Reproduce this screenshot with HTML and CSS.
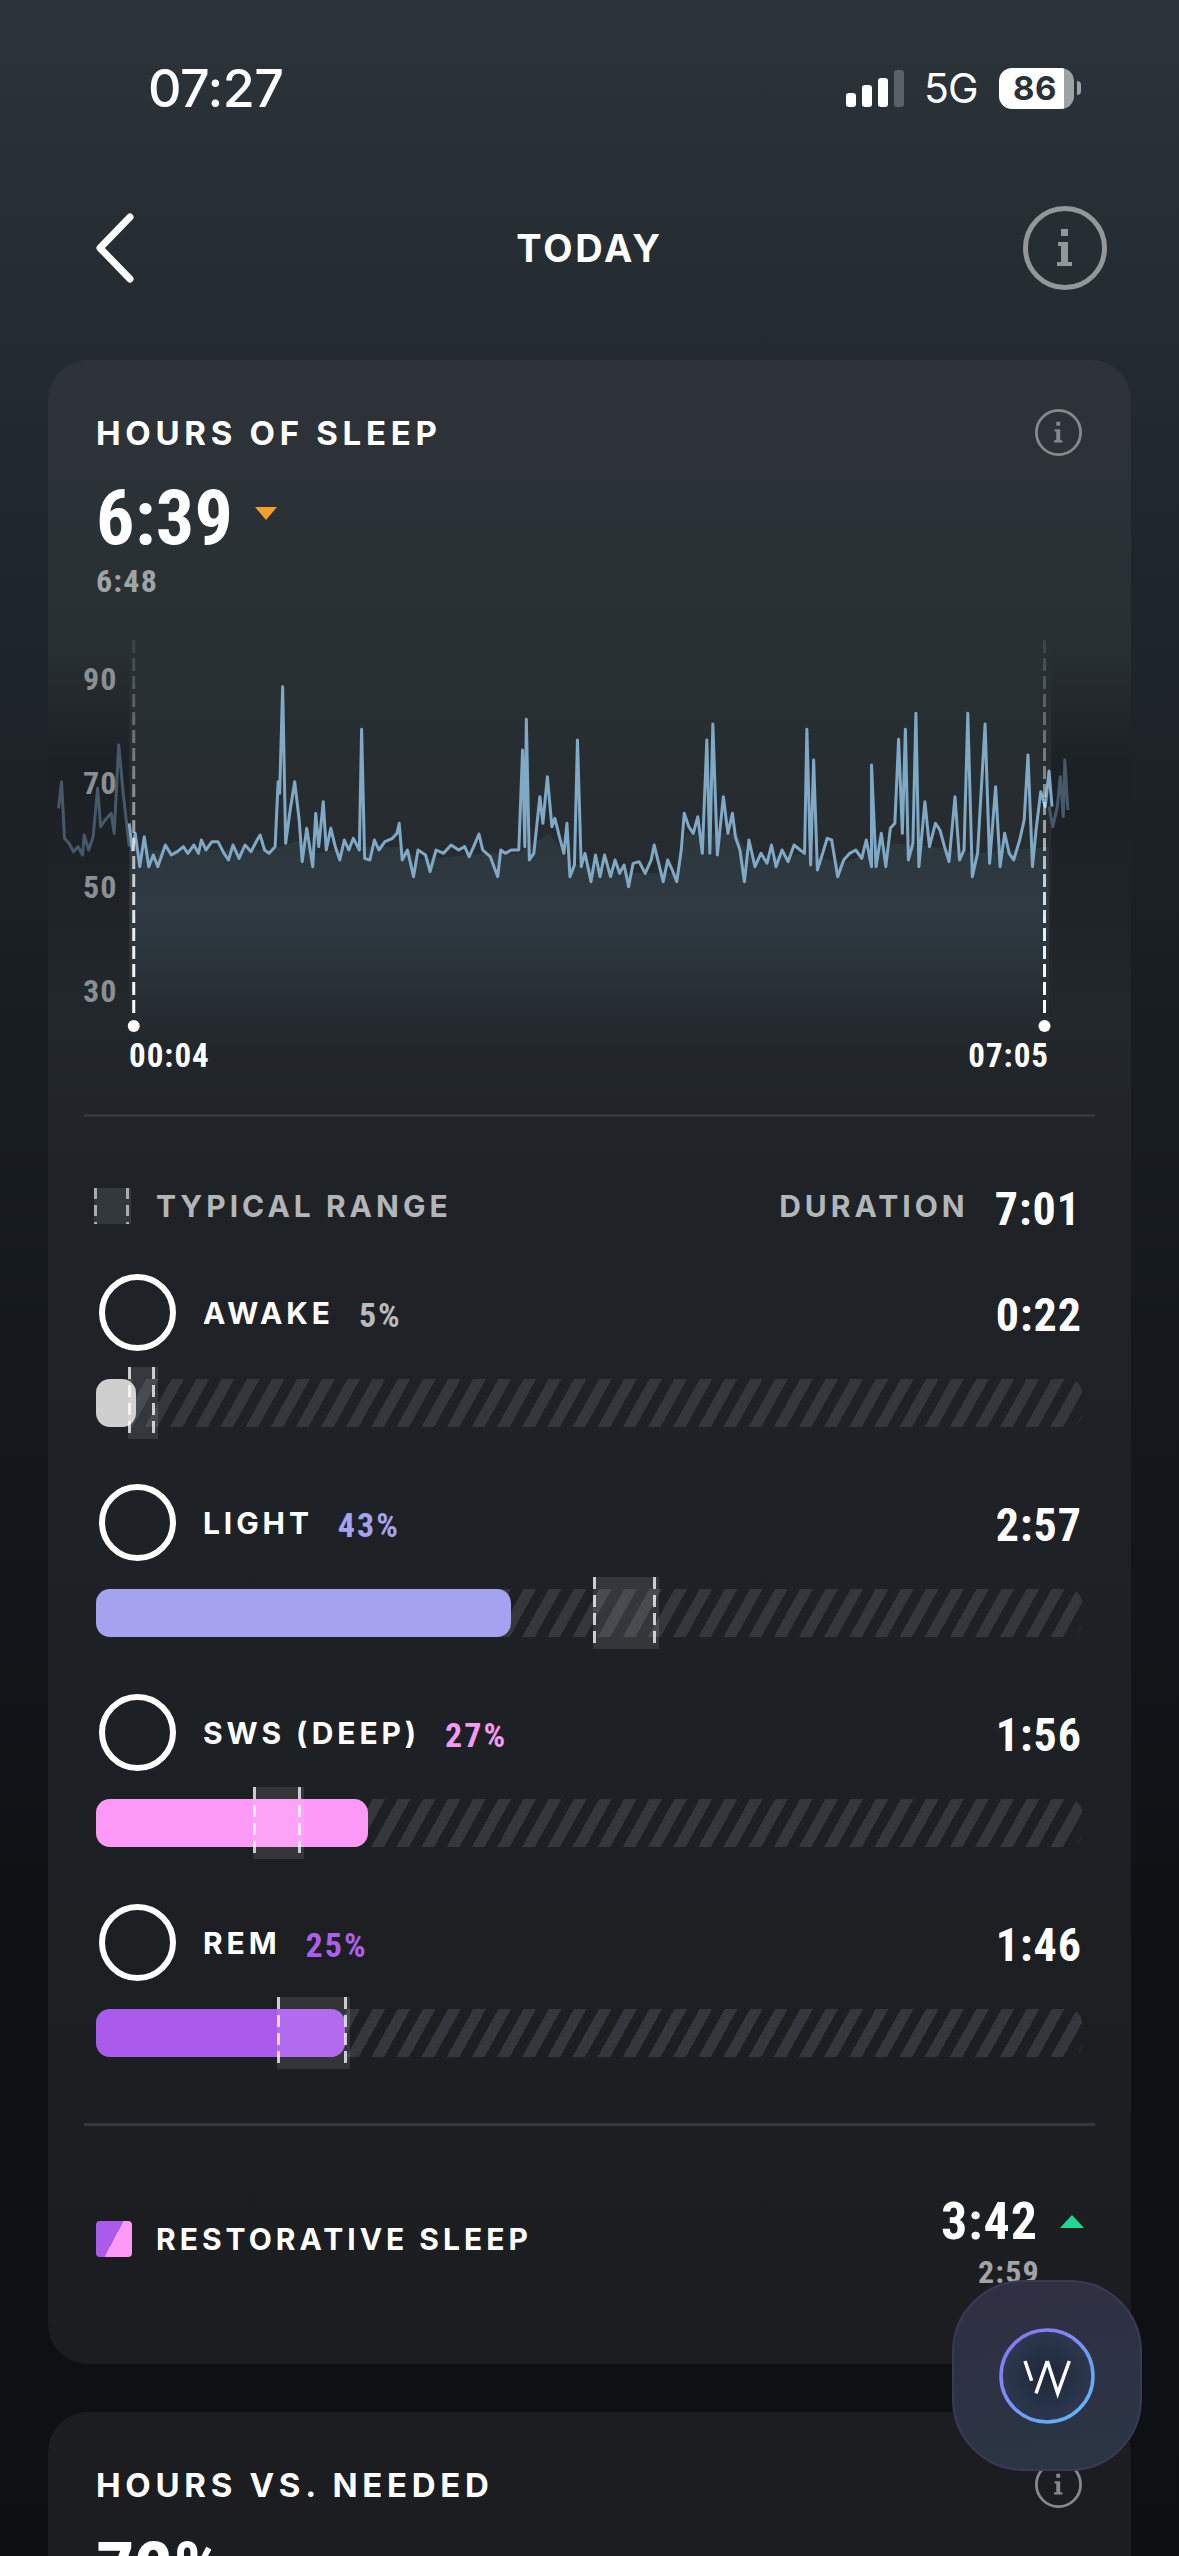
FILE: index.html
```html
<!DOCTYPE html>
<html lang="en">
<head>
    <meta charset="UTF-8">
    <title>Today</title>
    <link rel="stylesheet" href="styles.css">
</head>
<body>
    <svg class="defs" width="0" height="0">
        <symbol id="info" viewBox="0 0 84 84">
            <circle cx="42" cy="42" r="39.5" fill="none" stroke="currentColor" stroke-width="5"/>
            <path fill="currentColor" d="M38 23h7v7h-7zM35 36h10v20h4v4H34v-4h4V40h-3z"/>
        </symbol>
    </svg>

    <div class="status-bar">
        <span class="clock">07:27</span>
        <div class="status-right">
            <div class="signal">
                <span class="sig sig1"></span>
                <span class="sig sig2"></span>
                <span class="sig sig3"></span>
                <span class="sig sig4"></span>
            </div>
            <span class="network">5G</span>
            <div class="battery"><span class="battery-num">86</span></div>
            <span class="battery-nub"></span>
        </div>
    </div>

    <header class="nav">
        <div class="nav-side">
            <svg class="back" width="40" height="72" viewBox="0 0 40 72">
                <path d="M34 5 4 36l30 31" fill="none" stroke="#fff" stroke-width="7" stroke-linecap="round" stroke-linejoin="round"/>
            </svg>
        </div>
        <span class="nav-title">TODAY</span>
        <div class="nav-side">
            <svg class="info-big" width="84" height="84"><use href="#info"/></svg>
        </div>
    </header>

    <section class="card card-main">
        <div class="card-head">
            <span class="label">HOURS OF SLEEP</span>
            <svg class="info-small" width="47" height="47"><use href="#info"/></svg>
        </div>
        <div class="big-row">
            <span class="big-num">6:39</span>
            <span class="tri-down"></span>
        </div>
        <div class="sub-num">6:48</div>

        <div class="chart">
            <svg class="chart-svg" viewBox="64 0 1440 1482" preserveAspectRatio="none">
                <defs>
                    <linearGradient id="under" gradientUnits="userSpaceOnUse" x1="0" y1="700" x2="0" y2="1280">
                        <stop offset="0" stop-color="#2c373e"/>
                        <stop offset="0.3" stop-color="#2f3a42"/>
                        <stop offset="1" stop-color="#2f3a42" stop-opacity="0"/>
                    </linearGradient>
                    <linearGradient id="side" gradientUnits="userSpaceOnUse" x1="0" y1="60" x2="0" y2="1180">
                        <stop offset="0" stop-color="#12161a" stop-opacity="0"/>
                        <stop offset="0.35" stop-color="#12161a" stop-opacity="0.55"/>
                        <stop offset="0.7" stop-color="#12161a" stop-opacity="0.35"/>
                        <stop offset="1" stop-color="#12161a" stop-opacity="0"/>
                    </linearGradient>
                    <linearGradient id="dash" gradientUnits="userSpaceOnUse" x1="0" y1="60" x2="0" y2="1190">
                        <stop offset="0" stop-color="#fff" stop-opacity="0.08"/>
                        <stop offset="0.5" stop-color="#fff" stop-opacity="0.55"/>
                        <stop offset="0.75" stop-color="#fff" stop-opacity="0.9"/>
                        <stop offset="1" stop-color="#fff"/>
                    </linearGradient>
                </defs>
                <rect x="64" y="60" width="108" height="1120" fill="url(#side)"/>
                <rect x="1398" y="60" width="106" height="1120" fill="url(#side)"/>
                <polygon fill="url(#under)" points="172,690 220,690 300,690 360,690 400,660 420,700 480,680 530,680 560,720 640,700 690,700 730,640 760,730 830,760 900,760 912,640 980,640 1000,720 1070,700 1120,730 1190,670 1240,680 1300,700 1395,680 1395,1300 172,1300"/>
                <polyline class="hr-faded" points="78,565 82,485 86,655 92,670 98,695 104,680 110,705 112,645 118,690 124,650 130,505 134,620 140,600 148,580 152,640 158,375 164,520 172,680"/>
                <polyline class="hr-faded" points="1395,560 1400,620 1406,560 1410,470 1414,590 1416,420 1420,570"/>
                <polyline class="hr-line" points="172,610 176,690 180,640 186,740 192,650 198,740 204,705 210,740 220,675 228,705 236,695 244,680 250,700 258,675 264,700 268,660 274,690 282,665 290,665 298,700 304,720 310,675 318,715 326,675 334,695 342,660 346,645 352,690 358,700 366,680 370,485 372,520 376,200 380,670 386,570 392,485 398,600 402,725 408,625 416,740 420,580 424,680 430,545 434,690 440,625 446,680 452,720 458,660 464,690 470,655 478,690 481,328 485,715 492,720 498,660 504,690 512,665 522,655 528,640 531,610 535,720 542,690 550,770 556,690 566,705 572,755 580,690 590,700 600,675 610,690 618,680 624,710 630,680 637,642 642,690 652,710 662,770 666,690 672,700 680,690 690,690 695,390 698,680 700,298 704,720 710,700 718,530 722,610 728,470 734,620 738,595 744,650 750,700 754,610 758,770 764,735 768,360 773,740 778,700 786,785 792,705 798,770 804,705 812,770 818,720 824,760 830,735 836,800 842,730 850,725 858,760 866,720 870,675 876,730 882,785 888,720 894,750 900,785 906,690 910,580 916,620 922,640 928,590 934,700 940,360 944,700 948,312 954,705 962,530 968,640 974,580 978,650 984,690 990,785 996,660 1004,740 1012,700 1020,730 1026,675 1032,740 1040,690 1048,725 1056,675 1064,690 1070,700 1073,328 1078,735 1082,420 1087,750 1094,700 1100,655 1106,660 1114,770 1122,720 1130,700 1138,690 1146,715 1152,660 1159,740 1159,435 1165,740 1172,640 1178,740 1184,625 1190,610 1195,358 1200,640 1204,328 1208,720 1214,670 1218,280 1222,740 1230,545 1236,680 1244,610 1250,630 1256,680 1262,725 1270,530 1276,720 1282,690 1287,280 1293,770 1300,700 1310,312 1316,730 1324,500 1330,740 1336,640 1342,700 1348,720 1356,660 1362,600 1367,405 1373,740 1378,625 1384,515 1390,560 1395,453 1399,560"/>
                <line class="window" x1="178" y1="60" x2="178" y2="1190"/>
                <line class="window" x1="1389" y1="60" x2="1389" y2="1190"/>
                <ellipse cx="178" cy="1218" rx="8" ry="18" fill="#fff"/>
                <ellipse cx="1389" cy="1218" rx="8" ry="18" fill="#fff"/>
            </svg>
            <div class="chart-axis">
                <span>90</span>
                <span>70</span>
                <span>50</span>
                <span>30</span>
            </div>
            <div class="chart-times">
                <span>00:04</span>
                <span>07:05</span>
            </div>
        </div>
        <div class="divider"></div>

        <div class="typical">
            <span class="range-key"></span>
            <span class="label-muted typical-name">TYPICAL RANGE</span>
            <span class="label-muted duration-name">DURATION</span>
            <span class="time">7:01</span>
        </div>

        <div class="stages">
            <div class="stage">
                <div class="stage-head">
                    <span class="ring"></span>
                    <span class="stage-name">AWAKE</span>
                    <span class="pct pct-awake">5%</span>
                    <span class="time">0:22</span>
                </div>
                <div class="bar">
                    <div class="bar-fill fill-awake" style="width:4.1%"></div>
                    <div class="bar-range" style="left:3.2%;width:3.1%"></div>
                </div>
            </div>
            <div class="stage">
                <div class="stage-head">
                    <span class="ring"></span>
                    <span class="stage-name">LIGHT</span>
                    <span class="pct pct-light">43%</span>
                    <span class="time">2:57</span>
                </div>
                <div class="bar">
                    <div class="bar-fill fill-light" style="width:42.1%"></div>
                    <div class="bar-range" style="left:50.4%;width:6.7%"></div>
                </div>
            </div>
            <div class="stage">
                <div class="stage-head">
                    <span class="ring"></span>
                    <span class="stage-name">SWS (DEEP)</span>
                    <span class="pct pct-sws">27%</span>
                    <span class="time">1:56</span>
                </div>
                <div class="bar">
                    <div class="bar-fill fill-sws" style="width:27.6%"></div>
                    <div class="bar-range" style="left:15.9%;width:5.2%"></div>
                </div>
            </div>
            <div class="stage">
                <div class="stage-head">
                    <span class="ring"></span>
                    <span class="stage-name">REM</span>
                    <span class="pct pct-rem">25%</span>
                    <span class="time">1:46</span>
                </div>
                <div class="bar">
                    <div class="bar-fill fill-rem" style="width:25.3%"></div>
                    <div class="bar-range" style="left:18.4%;width:7.4%"></div>
                </div>
            </div>
        </div>
        <div class="divider divider-low"></div>

        <div class="restore">
            <div class="restore-left">
                <span class="restore-key"></span>
                <span class="label restore-name">RESTORATIVE SLEEP</span>
            </div>
            <div class="restore-right">
                <div class="restore-top">
                    <span class="restore-num">3:42</span>
                    <span class="tri-up"></span>
                </div>
                <div class="sub-num restore-sub">2:59</div>
            </div>
        </div>
    </section>

    <section class="card card-next">
        <div class="card-head">
            <span class="label">HOURS VS. NEEDED</span>
            <svg class="info-small" width="47" height="47"><use href="#info"/></svg>
        </div>
        <div class="big-row">
            <span class="big-num">72%</span>
        </div>
    </section>

    <!-- floating button -->
    <div class="fab">
        <svg class="fab-logo" width="96" height="96" viewBox="0 0 96 96">
            <defs>
                <linearGradient id="ringGrad" x1="0.15" y1="0.05" x2="0.85" y2="0.95">
                    <stop offset="0" stop-color="#8a76f2"/>
                    <stop offset="1" stop-color="#62b4f5"/>
                </linearGradient>
                <radialGradient id="ringFill" cx="0.5" cy="0.5" r="0.5">
                    <stop offset="0" stop-color="#1f2838"/>
                    <stop offset="1" stop-color="#2d3850"/>
                </radialGradient>
            </defs>
            <circle cx="48" cy="48" r="46" fill="url(#ringFill)" stroke="url(#ringGrad)" stroke-width="3.5"/>
            <path d="M26 33l6.700 19.700M48.300 33 37 65.300M48.300 33l10.400 32.300L70.300 33" fill="none" stroke="#fff" stroke-width="3.500"/>
        </svg>
    </div>
</body>
</html>
```

FILE: styles.css
```css
html, body {
    margin: 0;
    height: 2556px;
    overflow: hidden;
}
body {
    position: relative;
    width: 1179px;
    background: linear-gradient(180deg, #2b343a 0%, #232b30 14%, #181d21 40%, #0e1215 75%, #0c1013 100%);
    color: #fff;
    font-family: 'Roboto', sans-serif;
}
.defs {
    position: absolute;
}

/* status bar */
.status-bar {
    height: 176px;
    padding: 0 98px 0 148px;
    display: flex;
    align-items: center;
    justify-content: space-between;
}
.clock {
    font-family: 'Inter', sans-serif;
    font-size: 52px;
    font-weight: 500;
    letter-spacing: -0.5px;
}
.status-right {
    display: flex;
    align-items: center;
}
.signal {
    display: flex;
    align-items: flex-end;
    gap: 6px;
    height: 37px;
    margin-right: 20px;
}
.sig {
    width: 10px;
    border-radius: 3px;
    background: #fff;
}
.sig1 { height: 14px; }
.sig2 { height: 22px; }
.sig3 { height: 29px; }
.sig4 { height: 37px; background: #5b6369; }
.network {
    font-family: 'Inter', sans-serif;
    font-size: 41px;
    font-weight: 400;
    letter-spacing: -1px;
    width: 75px;
}
.battery {
    width: 75px;
    height: 41px;
    border-radius: 13px;
    background: linear-gradient(90deg, #fff 86.500%, #9da2a5 86.500%);
    display: flex;
    align-items: center;
    padding-left: 14px;
    box-sizing: border-box;
}
.battery-num {
    font-family: 'Inter', sans-serif;
    font-size: 33px;
    font-weight: 700;
    color: #2a3238;
    letter-spacing: 0.5px;
}
.battery-nub {
    width: 4px;
    height: 14px;
    margin-left: 3px;
    border-radius: 0 7px 7px 0;
    background: #9da2a5;
}

/* top nav */
.nav {
    height: 144px;
    padding: 0 72px;
    display: flex;
    align-items: center;
    justify-content: space-between;
}
.nav-side {
    width: 84px;
    height: 84px;
    display: flex;
    align-items: center;
}
.back {
    margin-left: 24px;
}
.nav-title {
    font-family: 'Inter', sans-serif;
    font-size: 38px;
    font-weight: 700;
    letter-spacing: 2.800px;
}
.info-big {
    color: #92979a;
}
.info-small {
    color: #85898d;
}

/* cards */
.card {
    margin: 40px 48px 0;
    padding-top: 49px;
    border-radius: 40px;
}
.card-main {
    height: 2004px;
    box-sizing: border-box;
    background: linear-gradient(180deg, #2d3338 0%, #293034 14%, #1f2327 42%, #1b1d20 100%);
}
.card-next {
    margin-top: 48px;
    height: 400px;
    box-sizing: border-box;
    background: #1b1d20;
}
.card-head {
    height: 47px;
    padding: 0 49px 0 48px;
    display: flex;
    align-items: center;
    justify-content: space-between;
}
.label {
    font-family: 'Inter', sans-serif;
    font-size: 33px;
    font-weight: 700;
    letter-spacing: 4.700px;
}
.label-muted {
    font-family: 'Inter', sans-serif;
    font-size: 30px;
    font-weight: 700;
    letter-spacing: 4px;
    color: #b3b6b9;
}
.big-row {
    height: 64px;
    margin-top: 30px;
    padding-left: 48px;
    display: flex;
    align-items: center;
}
.big-num {
    font-size: 76px;
    font-weight: 700;
    font-stretch: 85%;
    letter-spacing: 0.3px;
    line-height: 64px;
}
.tri-down {
    width: 0;
    height: 0;
    margin: 0 0 10px 22px;
    border-left: 11.500px solid transparent;
    border-right: 11.500px solid transparent;
    border-top: 13px solid #f59e2c;
}
.tri-up {
    width: 0;
    height: 0;
    margin: 0 0 0 22px;
    border-left: 12px solid transparent;
    border-right: 12px solid transparent;
    border-bottom: 13px solid #1fd896;
}
.sub-num {
    margin-top: 13px;
    padding-left: 48px;
    font-size: 32px;
    font-weight: 700;
    font-stretch: 85%;
    letter-spacing: 1.200px;
    line-height: 36px;
    color: #a0a4a7;
}

/* heart rate chart */
.chart {
    position: relative;
    height: 494px;
    margin-top: 21px;
}
.chart-svg {
    position: absolute;
    top: 0;
    left: 0;
    width: 100%;
    height: 100%;
}
.hr-line, .hr-faded {
    fill: none;
    stroke-linejoin: round;
    vector-effect: non-scaling-stroke;
}
.hr-line {
    stroke: #80a9c6;
    stroke-width: 3px;
}
.hr-faded {
    stroke: #46596a;
    stroke-width: 3px;
}
.window {
    stroke: url(#dash);
    stroke-width: 3px;
    stroke-dasharray: 13 5;
    vector-effect: non-scaling-stroke;
}
.chart-axis {
    position: absolute;
    top: 41px;
    left: 35px;
    display: flex;
    flex-direction: column;
    gap: 68px;
    font-size: 32px;
    font-weight: 700;
    font-stretch: 85%;
    letter-spacing: 1px;
    line-height: 36px;
    color: #8b8f93;
}
.chart-times {
    position: absolute;
    top: 418px;
    left: 81px;
    right: 82px;
    display: flex;
    justify-content: space-between;
    font-size: 33px;
    font-weight: 700;
    font-stretch: 85%;
    letter-spacing: 1px;
    line-height: 36px;
}
.divider {
    height: 3px;
    margin: 0 36px;
    background: #33383c;
}
.divider-low {
    margin-top: 66px;
}

/* stages */
.typical {
    height: 36px;
    margin-top: 71px;
    padding: 0 50px 0 46px;
    display: flex;
    align-items: center;
}
.range-key {
    width: 37px;
    height: 36px;
    background-color: #33383c;
    background-image:
        repeating-linear-gradient(180deg, #a9acaf 0 11px, transparent 11px 17px),
        repeating-linear-gradient(180deg, #a9acaf 0 11px, transparent 11px 17px);
    background-size: 3px 100%;
    background-position: left top, right 2px top;
    background-repeat: no-repeat;
}
.typical-name {
    margin-left: 25px;
}
.duration-name {
    margin-left: auto;
    margin-right: 26px;
}
.time {
    font-size: 46px;
    font-weight: 700;
    font-stretch: 85%;
    letter-spacing: 1px;
}
.typical .time {
    margin-top: 6px;
}
.stages {
    margin-top: 50px;
    padding: 0 49px 0 48px;
    display: flex;
    flex-direction: column;
    gap: 57px;
}
.stage-head {
    height: 77px;
    display: flex;
    align-items: center;
}
.stage-head .time {
    margin-left: auto;
    margin-top: 4px;
}
.ring {
    width: 77px;
    height: 77px;
    margin-left: 3px;
    box-sizing: border-box;
    border: 6px solid #fff;
    border-radius: 50%;
}
.stage-name {
    margin-left: 27px;
    font-family: 'Inter', sans-serif;
    font-size: 30px;
    font-weight: 700;
    letter-spacing: 3.900px;
}
.pct {
    margin-left: 25px;
    margin-top: 4px;
    font-size: 34px;
    font-weight: 700;
    font-stretch: 85%;
    letter-spacing: 2px;
}
.pct-awake { color: #b8babd; }
.pct-light { color: #a5a2ef; }
.pct-sws { color: #f59af0; }
.pct-rem { color: #ac5fea; }

.bar {
    position: relative;
    height: 48px;
    margin-top: 28px;
    border-radius: 14px;
    background: repeating-linear-gradient(119deg, #34383c 0 11px, transparent 11px 22px);
}
.bar-fill {
    height: 100%;
    border-radius: 14px;
}
.fill-awake { background: #cfcfcf; }
.fill-light { background: #a5a2ef; }
.fill-sws { background: #fd99f7; }
.fill-rem { background: #aa5bec; }

/* typical range marker on a bar */
.bar-range {
    position: absolute;
    top: -12px;
    bottom: -12px;
    background-color: rgba(255, 255, 255, 0.1);
    background-image:
        repeating-linear-gradient(180deg, rgba(255, 255, 255, 0.75) 0 12px, transparent 12px 18px),
        repeating-linear-gradient(180deg, rgba(255, 255, 255, 0.75) 0 12px, transparent 12px 18px);
    background-size: 3px 66px;
    background-position: left top, right 3px top;
    background-repeat: no-repeat;
}

/* restorative row */
.restore {
    margin-top: 68px;
    padding: 0 47px 0 48px;
    display: flex;
    justify-content: space-between;
    align-items: flex-start;
}
.restore-left {
    display: flex;
    align-items: center;
    margin-top: 27px;
}
.restore-name {
    font-size: 30px;
    letter-spacing: 4px;
}
.restore-key {
    width: 36px;
    height: 36px;
    margin-right: 24px;
    border-radius: 4px;
    background: linear-gradient(118deg, #aa5bec 50%, #fd99f7 50%);
}
.restore-right {
    display: flex;
    flex-direction: column;
    align-items: flex-end;
}
.restore-top {
    height: 54px;
    display: flex;
    align-items: center;
}
.restore-num {
    font-size: 52px;
    font-weight: 700;
    font-stretch: 85%;
    letter-spacing: 1px;
}
.restore-sub {
    margin-top: 6px;
    padding-right: 44px;
}

/* floating button */
.fab {
    position: absolute;
    left: 952px;
    top: 2280px;
    width: 190px;
    height: 191px;
    box-sizing: border-box;
    border: 2px solid #3b3a56;
    border-radius: 72px;
    background: linear-gradient(170deg, #2f2f42 0%, #2d3244 50%, #2a3644 100%);
    display: flex;
    align-items: center;
    justify-content: center;
}
.fab-logo {
    display: block;
}
```
